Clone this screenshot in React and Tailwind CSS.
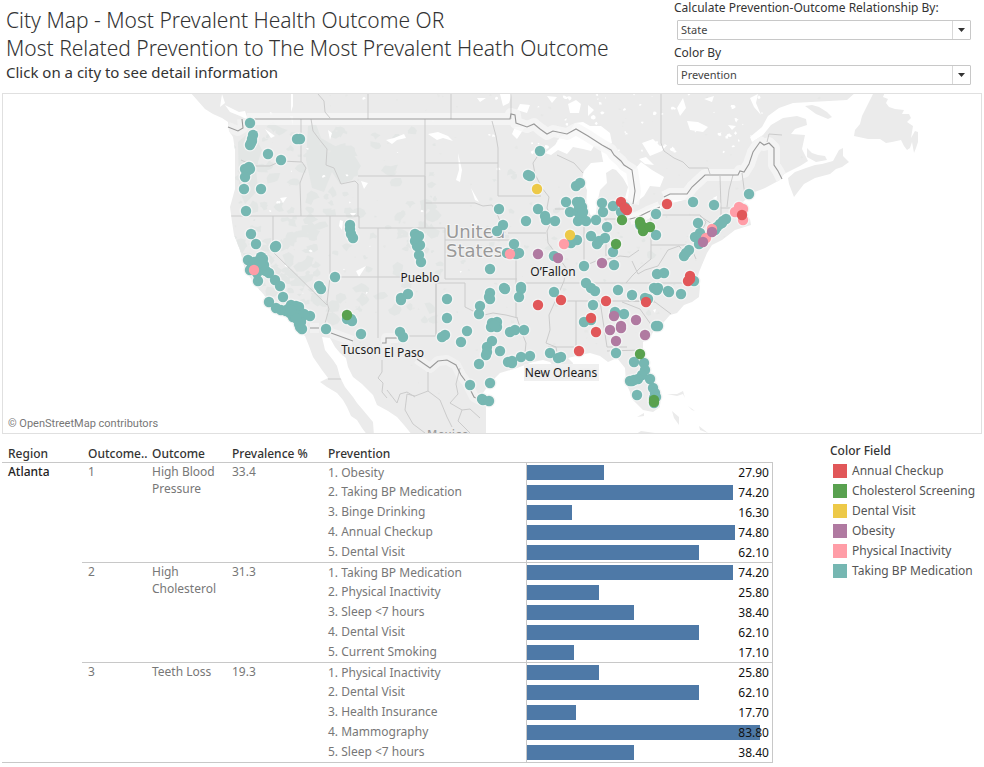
import React from "react";

const COLORS = {
  red: "#e15759",
  green: "#59a14f",
  yellow: "#edc948",
  purple: "#b07aa1",
  pink: "#ff9da7",
  teal: "#76b7b2",
};

const LEGEND = [
  ["Annual Checkup", "bg-[#e15759]"],
  ["Cholesterol Screening", "bg-[#59a14f]"],
  ["Dental Visit", "bg-[#edc948]"],
  ["Obesity", "bg-[#b07aa1]"],
  ["Physical Inactivity", "bg-[#ff9da7]"],
  ["Taking BP Medication", "bg-[#76b7b2]"],
];

const GROUPS = [
  {
    rank: 1,
    outcome: "High Blood Pressure",
    prevalence: "33.4",
    rows: [
      ["1. Obesity", 27.9],
      ["2. Taking BP Medication", 74.2],
      ["3. Binge Drinking", 16.3],
      ["4. Annual Checkup", 74.8],
      ["5. Dental Visit", 62.1],
    ],
  },
  {
    rank: 2,
    outcome: "High Cholesterol",
    prevalence: "31.3",
    rows: [
      ["1. Taking BP Medication", 74.2],
      ["2. Physical Inactivity", 25.8],
      ["3. Sleep <7 hours", 38.4],
      ["4. Dental Visit", 62.1],
      ["5. Current Smoking", 17.1],
    ],
  },
  {
    rank: 3,
    outcome: "Teeth Loss",
    prevalence: "19.3",
    rows: [
      ["1. Physical Inactivity", 25.8],
      ["2. Dental Visit", 62.1],
      ["3. Health Insurance", 17.7],
      ["4. Mammography", 83.8],
      ["5. Sleep <7 hours", 38.4],
    ],
  },
];

const AXIS_MAX = 88.3;

const CITIES = [
  ["teal", "250,123 253,135 252,139 250,145 252,141 251,143 297,139 300,139 268,154 281,160 245,169 249,167 250,169 247,171 245,177 244,189 261,189 246,211 251,234 256,244 275,247 276,246 350,225 350,229 351,234 353,238"],
  ["teal", "415,234 419,236 415,241 417,242 420,245 417,246 416,238 419,255 421,262 540,151 528,175 530,176 576,186 580,183 499,209 503,225 497,231 538,209 545,216 546,220 526,221 555,221 566,202 577,202 580,202 582,207 570,212 578,212 582,215 578,221 586,221 596,220 602,203 603,212 613,206 607,227 591,236 597,244 605,238 577,240 571,243 613,252 614,265 584,266 554,256 514,244 507,253 516,254 519,253 490,269 580,218 579,207 583,212 599,241"],
  ["teal", "625,207 621,212 656,214 656,235 693,202 714,205 749,194 698,223 726,219 723,221 720,224 717,227 715,230 722,223 700,233 695,237 702,237 699,244 689,250 684,256 686,253 657,274 664,273 640,225"],
  ["teal", "248,260 261,257 258,261 263,259 252,265 260,267 250,270 257,273 264,270 269,273 266,271 258,281 275,280 280,286 283,297 269,302 276,308 281,310 286,311 291,305 299,307 295,310 290,313 293,317 298,320 302,317 299,324 302,329 310,316 335,277 319,286 321,289 326,329 361,334 347,319 351,319 352,321 408,294 401,298 401,300 400,332 403,337 300,312 256,266 254,262 264,265 300,327 288,309 296,306 297,315 304,314 301,322 260,262 296,318 291,310"],
  ["teal", "504,288 505,289 521,287 521,289 519,297 490,293 489,297 490,299 480,306 479,314 447,299 447,318 467,331 461,342 442,337 445,335 492,323 497,322 491,327 497,327 494,325 510,332 515,330 524,330 492,341 487,347 487,352 486,355 500,351 479,364 508,362 512,361 512,363 521,357 530,356 550,353 558,358 561,357 490,383 470,385 482,399 483,400 489,401 554,292 586,283 591,288 595,291 593,305 584,322 591,320 618,290 615,312 624,314 616,353"],
  ["teal", "632,295 654,288 658,288 657,290 668,291 669,292 681,294 645,298 648,299 694,281 656,326 658,326 634,362 644,363 645,370 642,375 650,379 638,379 630,381 632,381 637,395 653,388 655,393 654,398 654,403 656,397 634,380"],
  ["pink", "254,270 510,254 564,244 739,207 735,212 743,209 739,211 743,220 712,229 706,238"],
  ["purple", "538,254 558,258 602,263 712,232 703,242 614,316 636,320 621,326 621,328 610,330 616,341 645,335"],
  ["red", "621,202 625,208 627,210 667,204 742,215 690,276 688,281 690,279 538,305 561,300 606,301 591,318 596,332 579,351 646,302"],
  ["green", "622,220 640,222 641,225 643,231 645,228 650,227 616,244 347,315 640,354 654,400 654,402"],
  ["yellow", "537,189 570,235"],
].flatMap(([color, points]) =>
  points.split(" ").map((p) => {
    const [x, y] = p.split(",").map(Number);
    return { color, x, y };
  })
);

const LAND = [
  "M190,92 L205,109 L213,114 L222,118 L228,122 L229,131 L233,137 L235,150 L235,189 L230,207 L232,222 L234,235 L240,250 L245,270 L257,287 L265,296 L268,305 L273,313 L290,318 L297,330 L305,336 L309,346 L313,357 L322,370 L328,378 L320,382 L327,387 L337,393 L343,400 L347,407 L351,416 L357,420 L362,428 L368,436 L374,436 L373,422 L363,410 L357,403 L353,397 L345,387 L340,377 L337,366 L333,360 L325,350 L322,337 L330,338 L335,347 L340,353 L346,358 L348,367 L353,377 L362,384 L373,395 L377,405 L388,411 L397,417 L404,425 L413,436 L486,436 L486,407 L483,393 L490,383 L500,373 L517,368 L533,362 L543,360 L550,362 L554,367 L562,366 L572,368 L573,363 L568,358 L580,355 L590,353 L600,356 L608,362 L617,358 L625,368 L626,383 L630,392 L633,400 L643,410 L653,412 L660,407 L660,394 L655,380 L648,367 L643,350 L643,342 L650,337 L655,329 L663,323 L670,315 L677,313 L684,305 L692,302 L699,297 L700,286 L697,280 L699,272 L707,253 L712,245 L722,240 L735,230 L751,225 L750,219 L744,216 L742,203 L752,193 L765,188 L780,180 L784,174 L800,166 L808,161 L802,149 L805,135 L791,134 L795,129 L807,125 L806,119 L797,116 L783,118 L771,125 L763,135 L752,142 L750,137 L762,127 L768,116 L779,108 L793,103 L847,100 L856,92 Z",
  "M874,92 L870,100 L866,108 L862,116 L860,124 L855,130 L854,136 L868,139 L880,139 L886,143 L892,142 L901,140 L904,146 L907,150 L910,148 L912,142 L914,153 L916,148 L918,142 L918,132 L915,131 L911,138 L913,126 L907,122 L911,118 L909,114 L902,114 L904,110 L895,109 L889,107 L886,103 L888,99 L883,97 L885,92 Z",
  "M789,184 L788,178 L795,172 L806,168 L815,165 L822,164 L833,161 L839,150 L843,148 L843,156 L849,162 L842,167 L836,169 L830,174 L815,178 L804,184 L794,197 Z",
  "M805,106 L812,105 L819,107 L827,112 L832,117 L828,119 L816,114 Z",
  "M807,148 L812,153 L818,155 L825,156 L827,160 L816,162 L807,157 Z",
  "M672,411 L679,417 L679,425 L674,418 Z M667,394 L677,394 L683,391 L685,398 L683,394 L677,396 Z M688,406 L695,411 L692,410 Z M699,426 L708,433 L700,430 Z",
  "M633,436 L641,431 L655,433 L670,436 Z M637,417 L644,413 L644,416 Z",
];

const LAKES = [
  "M545,153 L555,145 L560,137 L568,134 L575,123 L583,122 L590,126 L601,126 L610,133 L612,143 L604,147 L594,146 L591,151 L583,149 L573,147 L567,154 L558,150 L551,155 Z",
  "M584,171 L591,163 L602,162 L611,161 L617,166 L606,173 L607,183 L600,190 L597,204 L596,215 L591,216 L586,206 L587,190 L582,179 Z",
  "M600,146 L611,153 L622,166 L635,169 L641,162 L652,170 L664,177 L660,187 L650,186 L644,196 L634,204 L625,198 L628,187 L623,178 L616,170 L604,166 Z",
  "M624,219 L633,213 L643,212 L655,206 L664,205 L658,213 L648,219 L638,224 L632,220 Z",
  "M661,201 L666,196 L681,193 L689,195 L684,200 L668,204 Z",
  "M568,104 L576,100 L581,104 L579,113 L570,113 Z",
  "M500,94 L512,94 L509,103 L503,106 Z",
  "M520,104 L530,105 L527,113 L517,110 Z M515,127 L525,127 L517,139 L512,134 Z M477,98 L486,98 L480,102 Z",
  "M547,96 L557,97 L552,103 Z M588,105 L594,110 L588,116 Z",
  "M642,143 L653,139 L660,146 L667,145 L662,151 L650,156 Z M639,159 L646,157 L654,165 L645,164 Z",
  "M677,108 L683,98 L686,108 L680,116 Z M687,121 L698,122 L708,127 L703,132 L690,130 Z M704,99 L714,96 L712,102 Z M750,98 L758,94 L756,103 L761,115 L754,107 Z M728,125 L736,126 L732,130 Z",
  "M222,94 L225,103 L220,107 Z M225,105 L239,112 L245,111 L248,120 L240,116 L230,112 Z M265,129 L275,136 L271,138 Z",
  "M291,94 L293,94 L293,106 L291,112 Z M290,116 L293,116 L293,125 Z M328,130 L332,133 L330,140 Z M386,140 L394,138 L404,134 L406,138 L397,140 L392,144 Z",
  "M428,134 L438,132 L448,136 L453,141 L443,138 L437,140 Z M458,153 L462,170 L460,182 L456,180 L459,170 Z M471,188 L479,202 L475,200 Z",
  "M340,220 L343,221 L342,230 L339,226 Z M350,213 L356,213 L353,217 Z M361,181 L368,183 L364,189 Z M280,198 L287,197 L283,203 Z M356,271 L366,266 L359,277 Z",
  "M655,382 L658,384 L656,386 Z M713,198 L717,196 L716,204 Z M653,310 L656,309 L655,313 Z",
];

const STATE_LINES = [
  // Canadian provinces and Mexican states
  "M318,94 L324,101 L325,112 L330,118 M368,94 V119 M451,94 V119 M511,94 V119 M661,94 V143 L664,151 L674,158 L683,162 L689,168 L708,168 L710,174 M767,142 L769,134 L782,135",
  "M328,379 H342 M382,360 V372 L378,378 L383,383 L382,392 L387,398 M387,390 L397,403 L400,394 L407,392 L415,397 M428,372 L428,391 L415,396 L407,394 L405,410 L413,424 L425,433 M428,391 L440,400 L447,417 L452,427 M460,368 L456,384 L458,394 L450,403 L462,410 L470,409 L480,418 M462,410 L458,421 L470,433",
  // Pacific and mountain states
  "M301,119 V162 M241,160 L254,166 L270,166 L281,161 L302,162 L306,168 L303,175 L300,183 L301,216 M231,216 H359 M273,216 V252 L327,305 M311,119 L313,131 L319,139 L327,149 L326,165 L334,168 L341,184 L355,181 L358,184 V216 M358,176 H425 V228 M359,216 V228 H445 M330,216 V277 L327,303 L329,309 L322,334 M330,277 H436 M378,228 V338 M401,336 H436 V279",
  // Plains
  "M425,119 V228 M425,163 H498 M425,203 H475 L483,206 L492,205 L498,216 L505,233 M445,228 V240 H519 M445,240 V279 H517 M436,279 V336 M436,283 H465 V307 L475,312 L484,315 L493,313 L506,315 L518,318 M492,121 L496,136 L498,148 V196 H541 M508,233 H546 M516,245 V318 M517,283 H563 M517,318 L522,333 L526,343 L525,353",
  // Mississippi valley and lakes
  "M541,151 L533,163 L535,174 L542,188 L549,197 L547,208 L552,220 L547,231 L548,243 L557,255 L566,268 L564,281 L558,295 L549,315 L550,330 L546,343 L556,347 L557,353 M548,347 H574 M558,301 H655 M576,301 V354 M600,301 L607,347 M607,347 H627 M607,351 L642,350 M555,209 H582 M584,216 V264 M584,266 L596,261 L608,259 L620,256 L629,257 L639,250 M563,283 H700 M606,219 V256 M604,219 H630 M557,155 L574,163 L583,173",
  // East
  "M651,217 V245 H690 M661,215 H700 L706,222 L698,239 M651,245 L651,259 L640,268 L632,276 L626,283 M632,261 L638,274 L645,270 L658,266 L668,250 L679,246 L688,256 M690,245 L696,259 M622,302 L640,309 L652,326 M628,301 L655,302 L671,314 M720,176 L721,208 H744 M733,175 L729,190 L727,207 M742,173 L745,196 M721,208 V223 M700,216 L712,224",
];

const BORDER =
  "M247,119 H510 L511,114 L515,115 L516,123 L527,127 L534,124 L540,129 L547,134 L553,131 L567,134 L576,129 L588,136 L602,145 L611,150 L614,155 L621,161 L624,165 L632,170 L635,191 L633,204 M630,219 L638,217 L648,212 L660,207 M664,197 L670,194 L687,194 L692,187 L705,175 H738 L740,171 L744,172 L749,164 L753,152 L760,142 L764,145 L769,143 L774,148 L774,165 L778,171 L782,179";
const SOUTH_BORDER =
  "M310,328 L319,328 M331,333 L353,341 M382,343 H386 V338 H398 M417,359 L430,368 L438,361 L447,360 L456,365 L461,375 L467,383 L474,397 L480,400 M228,127 L238,131 L243,128 L242,119";

// Deterministic scatter of vegetation patches and small lakes over the base map.
function scatter(count, seed, x0, y0, w, h, min, max) {
  let s = seed;
  const next = () => {
    s = (s * 16807) % 2147483647;
    return s / 2147483647;
  };
  return Array.from({ length: count }, () => {
    const x = x0 + next() * w;
    const y = y0 + next() * h;
    const r = min + next() * (max - min);
    const pts = Array.from({ length: 8 }, (_, i) => {
      const a = (i / 8) * Math.PI * 2;
      const k = r * (0.45 + next() * 0.8);
      return `${(x + Math.cos(a) * k * 1.2).toFixed(1)},${(y + Math.sin(a) * k).toFixed(1)}`;
    });
    return `M${pts.join("L")}Z`;
  }).join(" ");
}

const VEGETATION =
  scatter(150, 77, 234, 122, 200, 200, 1, 7) +
  scatter(50, 913, 430, 170, 250, 150, 1, 4) +
  scatter(40, 431, 235, 225, 90, 80, 2, 7) +
  " M308,126 L316,124 L321,138 L335,146 L351,150 L361,166 L352,180 L340,184 L332,172 L324,192 L312,188 L306,160 Z M238,142 L252,130 L262,150 L256,168 L258,190 L245,204 L239,190 Z";
const PONDS =
  scatter(60, 1543, 530, 94, 240, 60, 0.5, 2.4) +
  scatter(26, 88, 270, 96, 230, 200, 0.4, 1.8);
const SPECKLE = scatter(260, 2027, 200, 94, 620, 310, 0.4, 1.6);

const LABELS = [
  ["Pueblo", 420, 282],
  ["O’Fallon", 553, 276],
  ["Tucson", 361, 354],
  ["El Paso", 404, 357],
];

function CityMap() {
  return (
    <svg
      viewBox="3 94 978 339"
      className="block h-auto w-full"
      role="img"
      aria-label="City map of the United States"
    >
      <defs>
        <clipPath id="land">
          <path d={LAND.join(" ")} />
        </clipPath>
      </defs>
      <path d={LAND.join(" ")} fill="#ebebeb" />
      <g clipPath="url(#land)">
        <path d={VEGETATION} fill="#e3e6e5" />
        <path d={SPECKLE} fill="#e7e8e7" />
        <path d={PONDS} fill="#ffffff" />
        <path d={LAKES.join(" ")} fill="#ffffff" />
        <path d={BORDER} fill="none" stroke="#f6f6f6" strokeWidth="12" strokeLinejoin="round" opacity="0.8" />
        <path d={SOUTH_BORDER} fill="none" stroke="#f3f3f3" strokeWidth="10" strokeLinejoin="round" opacity="0.7" />
        <path d={STATE_LINES.join(" ")} fill="none" stroke="#cbcbcb" strokeWidth="1" />
      </g>
      <path d={BORDER} fill="none" stroke="#999999" strokeWidth="1.1" />
      <path d={SOUTH_BORDER} fill="none" stroke="#999999" strokeWidth="1.1" />
      <g
        fill="#999999"
        stroke="#f4f4f4"
        strokeWidth="2"
        paintOrder="stroke"
        className="font-['DejaVu_Sans',sans-serif] text-[18px]"
      >
        <text x="446" y="238">United</text>
        <text x="446" y="257">States</text>
      </g>
      <text
        x="448"
        y="439"
        textAnchor="middle"
        fill="#999999"
        className="font-['DejaVu_Sans',sans-serif] text-[12px]"
      >
        Mexico
      </text>
      <g fill="#f3f4f4">
        {CITIES.map((c, i) => (
          <circle key={i} cx={c.x} cy={c.y} r="6.5" />
        ))}
      </g>
      {CITIES.map((c, i) => (
        <circle key={i} cx={c.x} cy={c.y} r="5.2" fill={COLORS[c.color]} />
      ))}
      <rect x="524" y="364" width="75" height="17" fill="#f0f0f0" />
      <g textAnchor="middle" fill="#1c1c1c" stroke="#eeeeee" strokeWidth="3" paintOrder="stroke" className="text-[12px]">
        {LABELS.map(([name, x, y]) => (
          <text key={name} x={x} y={y}>
            {name}
          </text>
        ))}
        <text x="561" y="377">New Orleans</text>
      </g>
      <text x="8" y="427" fill="#777777" className="font-[Roboto,sans-serif] text-[11px]">
        © OpenStreetMap contributors
      </text>
    </svg>
  );
}

function Picker({ id, label, options }) {
  return (
    <div className="flex flex-col">
      <label htmlFor={id} className="text-[12px] leading-4 text-[#333333]">
        {label}
      </label>
      <div className="relative mt-1 mr-[13px] ml-[3px] h-5">
        <select
          id={id}
          className="block h-5 w-full appearance-none rounded-[1px] border border-[#c8c8c8] bg-white pl-[3px] text-[11px] leading-4 text-[#444444]"
        >
          {options.map((o) => (
            <option key={o}>{o}</option>
          ))}
        </select>
        <span className="pointer-events-none absolute top-px right-px bottom-px flex w-[18px] items-center justify-center border-l border-[#d8d8d8]">
          <svg width="7" height="4" viewBox="0 0 7 4">
            <path d="M0,0 H7 L3.5,4 Z" fill="#333333" />
          </svg>
        </span>
      </div>
    </div>
  );
}

function OutcomeTable() {
  const head = "p-0 pl-[6px] text-left align-top font-medium text-[#333333] whitespace-nowrap";
  const cell = "border-t border-[#c8c8c8] p-0 pl-[6px] align-top";
  return (
    <table className="w-full table-fixed border-separate border-spacing-0 border-b border-[#c8c8c8] text-[12px] leading-[17px] text-[#777777]">
      <colgroup>
        <col className="w-20" />
        <col className="w-16" />
        <col className="w-20" />
        <col className="w-24" />
        <col className="w-[204px]" />
        <col />
      </colgroup>
      <thead>
        <tr className="h-[17px]">
          <th className={head}>Region</th>
          <th className={head}>Outcome..</th>
          <th className={head}>Outcome</th>
          <th className={head}>Prevalence %</th>
          <th className={head}>Prevention</th>
          <th className={head} aria-label="Value"></th>
        </tr>
      </thead>
      <tbody>
        {GROUPS.map((g, gi) =>
          g.rows.map(([name, value], ri) => (
            <tr key={g.rank + name} className="h-5">
              {gi === 0 && ri === 0 && (
                <th rowSpan={15} className={cell + " text-left font-medium text-[#222222]"}>
                  Atlanta
                </th>
              )}
              {ri === 0 && (
                <>
                  <td rowSpan={5} className={cell}>{g.rank}</td>
                  <td rowSpan={5} className={cell}>{g.outcome}</td>
                  <td rowSpan={5} className={cell}>{g.prevalence}</td>
                </>
              )}
              <td className={ri === 0 ? cell : "p-0 pl-[6px] align-middle"}>
                <div className={ri === 0 ? "h-[19px] leading-[19px]" : "h-5 leading-5"}>{name}</div>
              </td>
              <td className={"border-x border-[#c8c8c8] p-0 " + (ri === 0 ? "border-t" : "")}>
                <div className={"relative flex items-end pb-[2px] " + (ri === 0 ? "h-[19px]" : "h-5")}>
                  <div className="h-[15px] bg-[#4e79a7]" style={{ width: `${(value / AXIS_MAX) * 100}%` }} />
                  <span className="absolute right-[3px] bottom-0 leading-[19px] text-[#111111]">
                    {value.toFixed(2)}
                  </span>
                </div>
              </td>
            </tr>
          ))
        )}
      </tbody>
    </table>
  );
}

export default function App() {
  return (
    <main className="bg-white font-['Noto_Sans',sans-serif] text-[#333333]">
      <header className="flex h-[93px] justify-between">
        <div className="pt-[6px] pl-[6px]">
          <h1 className="text-[21px] leading-7 font-light whitespace-nowrap">
            City Map - Most Prevalent Health Outcome OR
            <br />
            Most Related Prevention to The Most Prevalent Heath Outcome
          </h1>
          <p className="text-[15px] leading-5">Click on a city to see detail information</p>
        </div>
        <div className="flex w-[310px] shrink-0 flex-col gap-[5px]">
          <Picker id="relation" label="Calculate Prevention-Outcome Relationship By:" options={["State", "City"]} />
          <Picker id="color" label="Color By" options={["Prevention", "Outcome"]} />
        </div>
      </header>
      <section className="mr-[2px] ml-[2px] border border-[#e0e0e0]">
        <CityMap />
      </section>
      <section className="flex gap-[57px] pt-[11px] pl-[2px]">
        <div className="min-w-0 flex-1">
          <OutcomeTable />
        </div>
        <aside className="w-[154px] shrink-0">
          <h2 className="mb-1 text-[12px] leading-3 font-medium">Color Field</h2>
          <ul>
            {LEGEND.map(([name, swatch]) => (
              <li key={name} className="flex h-5 items-center gap-[5px] pl-[3px] text-[12px] whitespace-nowrap text-[#555555]">
                <span className={"h-[14px] w-[14px] " + swatch} />
                {name}
              </li>
            ))}
          </ul>
        </aside>
      </section>
    </main>
  );
}
